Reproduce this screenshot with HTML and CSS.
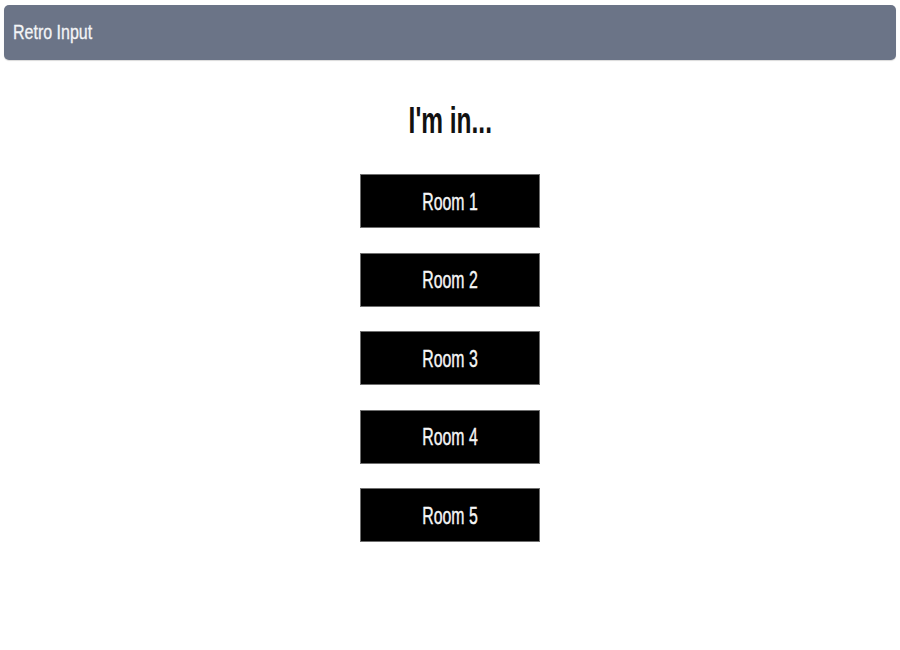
FILE: index.html
```html
<!DOCTYPE html>
<html>
<head>
<meta charset="utf-8">
<title>Retro Input</title>
<link rel="stylesheet" href="styles.css">
</head>
<body>
  <header class="topbar">
    <span class="topbar-title">Retro Input</span>
  </header>
  <main class="content">
    <h1 class="heading"><span class="heading-text">I'm in...</span></h1>
    <div class="rooms">
      <button class="room"><span class="room-text">Room 1</span></button>
      <button class="room"><span class="room-text">Room 2</span></button>
      <button class="room"><span class="room-text">Room 3</span></button>
      <button class="room"><span class="room-text">Room 4</span></button>
      <button class="room"><span class="room-text">Room 5</span></button>
    </div>
  </main>
</body>
</html>
```

FILE: styles.css
```css
html, body {
  margin: 0;
  padding: 0;
  background: #ffffff;
  font-family: "Liberation Sans", Arial, sans-serif;
}

.topbar {
  margin: 5px 4px 0 4px;
  height: 55px;
  background: #6b7487;
  border-radius: 5px;
  box-shadow: 0 1px 1px rgba(0,0,0,0.15);
  display: flex;
  align-items: flex-start;
  box-sizing: border-box;
  padding: 16px 0 0 9px;
}

.topbar-title {
  display: inline-block;
  color: #f4f5f7;
  font-size: 20px;
  line-height: 23px;
  -webkit-text-stroke: 0.3px #f4f5f7;
  transform: scaleX(0.8);
  transform-origin: left center;
}

.content {
  display: flex;
  flex-direction: column;
  align-items: center;
}

.heading {
  margin: 40px 0 0 0;
  font-size: 36px;
  font-weight: bold;
  color: #111;
  line-height: 41px;
}

.heading-text {
  display: inline-block;
  transform: scaleX(0.68);
}

.rooms {
  margin-top: 33px;
  display: flex;
  flex-direction: column;
  gap: 24.5px;
}

.room {
  width: 180px;
  height: 54px;
  margin: 0;
  padding: 1px 0 0 0;
  background: #000;
  border: 1px solid #6e6e6e;
  border-radius: 0;
  color: #f6f6f6;
  font-family: "Liberation Sans", Arial, sans-serif;
  font-size: 24px;
  line-height: 28px;
  display: flex;
  align-items: center;
  justify-content: center;
  box-sizing: border-box;
}

.room-text {
  display: inline-block;
  -webkit-text-stroke: 0.4px #f6f6f6;
  transform: scaleX(0.66);
}
```
